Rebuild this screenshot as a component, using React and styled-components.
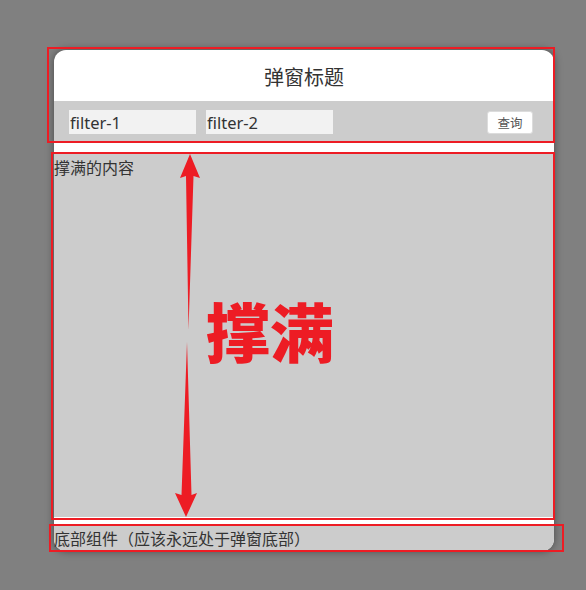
import React from 'react';
import styled, { createGlobalStyle } from 'styled-components';

const GlobalStyle = createGlobalStyle`
  html, body {
    margin: 0px;
    padding: 0px;
    background-color: #808080;
  }
  body {
    font-family: 'Noto Sans CJK SC', 'Noto Sans', sans-serif;
  }
`;

const RED = '#ed1c24';
const CJK = `'Noto Sans CJK SC', 'Noto Sans', sans-serif`;

const Stage = styled.div`
  position: relative;
  width: 586px;
  height: 590px;
  padding: 50px 0 0 54px;
  box-sizing: border-box;
  overflow: hidden;
`;

const Dialog = styled.div`
  width: 500px;
  height: 501px;
  background-color: #fff;
  border-radius: 12px;
  box-shadow: 0 0 8px rgba(0, 0, 0, 0.45);
  display: flex;
  flex-direction: column;
`;

const Title = styled.div`
  height: 51px;
  flex-shrink: 0;
  display: flex;
  align-items: center;
  justify-content: center;
  padding-top: 2px;
  box-sizing: border-box;
  font-family: ${CJK};
  font-size: 20px;
  color: #333;
`;

const FilterBar = styled.div`
  height: 42px;
  flex-shrink: 0;
  background-color: #cccccc;
  display: flex;
  align-items: center;
  gap: 10px;
  padding: 0 21px 0 15px;
  box-sizing: border-box;
`;

const FilterInput = styled.input`
  width: 127px;
  height: 24px;
  border: none;
  outline: none;
  background-color: #f2f2f2;
  padding: 0 1px;
  box-sizing: border-box;
  font-family: 'Noto Sans', sans-serif;
  font-size: 16.5px;
  color: #333;
`;

const QueryBtn = styled.button`
  margin-left: auto;
  width: 46px;
  height: 23px;
  padding: 0;
  background-color: #fff;
  border: 1px solid #dcdcdc;
  border-radius: 3px;
  font-family: ${CJK};
  font-size: 12.5px;
  color: #555;
  cursor: pointer;
`;

const Content = styled.div`
  flex: 1;
  margin-top: 10px;
  background-color: #cccccc;
  padding-top: 3px;
  font-family: ${CJK};
  font-size: 16px;
  line-height: 1.4;
  color: #333;
`;

const Footer = styled.div`
  height: 26px;
  flex-shrink: 0;
  margin-top: 8px;
  background-color: #cccccc;
  border-radius: 0 0 12px 12px;
  display: flex;
  align-items: center;
  font-family: ${CJK};
  font-size: 16px;
  color: #333;
`;

// annotation marks drawn over the screenshot
const Mark = styled.div`
  position: absolute;
  border: 2px solid ${RED};
  box-sizing: border-box;
  pointer-events: none;
`;

const Arrows = styled.svg`
  position: absolute;
  left: 0;
  top: 0;
  pointer-events: none;
`;

const BigLabel = styled.div`
  position: absolute;
  left: 206px;
  top: 297px;
  font-family: ${CJK};
  font-weight: 900;
  font-size: 64px;
  line-height: 1;
  color: ${RED};
  pointer-events: none;
`;

const marks = [
  { left: 47, top: 47, width: 508, height: 96 },
  { left: 51, top: 152, width: 504, height: 368 },
  { left: 49, top: 524, width: 515, height: 28 },
];

function App() {
  return (
    <React.Fragment>
      <GlobalStyle />
      <Stage>
        <Dialog>
          <Title>弹窗标题</Title>
          <FilterBar>
            <FilterInput defaultValue="filter-1" readOnly />
            <FilterInput defaultValue="filter-2" readOnly />
            <QueryBtn>查询</QueryBtn>
          </FilterBar>
          <Content>撑满的内容</Content>
          <Footer>底部组件（应该永远处于弹窗底部）</Footer>
        </Dialog>

        {marks.map((m, i) => (
          <Mark key={i} style={m} />
        ))}
        <Arrows width="586" height="590" viewBox="0 0 586 590">
          <polygon
            fill={RED}
            points="190,154 200,178 193.5,176 188.5,330 186,176 180,178"
          />
          <polygon
            fill={RED}
            points="187,342 191.5,495 197,493 186,517 175,493 181.5,495"
          />
        </Arrows>
        <BigLabel>撑满</BigLabel>
      </Stage>
    </React.Fragment>
  );
}

export default App;
